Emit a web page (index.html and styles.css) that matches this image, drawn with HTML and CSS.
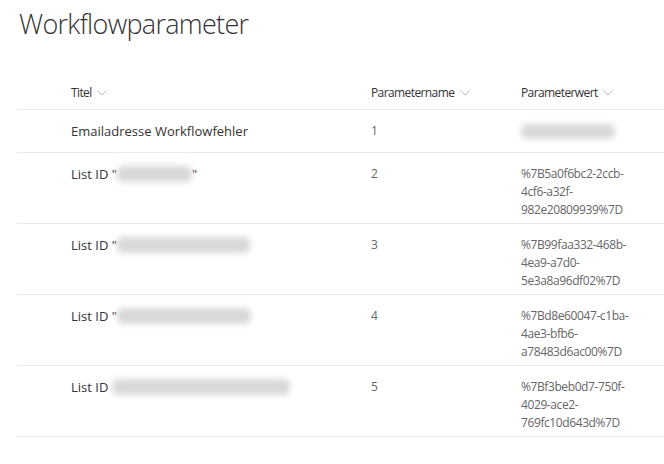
FILE: index.html
```html
<!DOCTYPE html>
<html lang="de">
<head>
    <meta charset="UTF-8">
    <title>Workflowparameter</title>
    <link rel="stylesheet" href="styles.css">
</head>
<body>
    <div class="page">
        <h1 class="page-title">Workflowparameter</h1>

        <div class="list">
            <div class="list-head">
                <div class="col col-title">Titel <svg class="chev" width="10" height="6" viewBox="0 0 10 6"><polyline points="0.5,0.5 5,5 9.5,0.5"/></svg></div>
                <div class="col col-name">Parametername <svg class="chev" width="10" height="6" viewBox="0 0 10 6"><polyline points="0.5,0.5 5,5 9.5,0.5"/></svg></div>
                <div class="col col-value">Parameterwert <svg class="chev" width="10" height="6" viewBox="0 0 10 6"><polyline points="0.5,0.5 5,5 9.5,0.5"/></svg></div>
            </div>

            <div class="list-row">
                <div class="col col-title">Emailadresse Workflowfehler</div>
                <div class="col col-name">1</div>
                <div class="col col-value"><span class="blur" style="width: 94px"></span></div>
            </div>

            <div class="list-row">
                <div class="col col-title">List ID "<span class="blur" style="width: 75px"></span>"</div>
                <div class="col col-name">2</div>
                <div class="col col-value">%7B5a0f6bc2-2ccb-4cf6-a32f-982e20809939%7D</div>
            </div>

            <div class="list-row">
                <div class="col col-title">List ID "<span class="blur" style="width: 133px"></span></div>
                <div class="col col-name">3</div>
                <div class="col col-value">%7B99faa332-468b-4ea9-a7d0-5e3a8a96df02%7D</div>
            </div>

            <div class="list-row">
                <div class="col col-title">List ID "<span class="blur" style="width: 134px"></span></div>
                <div class="col col-name">4</div>
                <div class="col col-value">%7Bd8e60047-c1ba-4ae3-bfb6-a78483d6ac00%7D</div>
            </div>

            <div class="list-row">
                <div class="col col-title">List ID <span class="blur" style="width: 178px"></span></div>
                <div class="col col-name">5</div>
                <div class="col col-value">%7Bf3beb0d7-750f-4029-ace2-769fc10d643d%7D</div>
            </div>
        </div>
    </div>
</body>
</html>
```

FILE: styles.css
```css
body {
    margin: 0;
    background: #fff;
    font-family: "Open Sans", "Noto Sans", sans-serif;
    color: #333;
}

.page {
    padding: 4px 0 0 17px;
}

.page-title {
    margin: 0 0 0 2px;
    font-size: 27px;
    font-weight: 300;
    letter-spacing: -0.7px;
    line-height: 40px;
    color: #333;
}

.list {
    margin-top: 23px;
}

.list-head,
.list-row {
    display: grid;
    grid-template-columns: 300px 150px 125px;
    padding-left: 54px;
    border-bottom: 1px solid #eaeaea;
    box-sizing: border-box;
}

.list-head {
    height: 43px;
    padding-top: 8px;
    align-items: center;
    font-size: 12px;
    letter-spacing: -0.6px;
    color: #333;
}

.list-row {
    min-height: 43px;
    padding-top: 11px;
    padding-bottom: 4px;
    align-items: start;
}

.chev {
    margin-left: 3px;
    vertical-align: 1px;
}

.chev polyline {
    fill: none;
    stroke: #b8b8b8;
    stroke-width: 1;
}

.list-row .col-title {
    font-size: 13px;
    line-height: 20px;
    color: #333;
}

.list-row .col-name,
.list-row .col-value {
    font-size: 12px;
    letter-spacing: -0.4px;
    line-height: 18px;
    color: #666;
    padding-top: 1px;
}

.blur {
    display: inline-block;
    height: 16px;
    vertical-align: -3px;
    background: #d8d8d8;
    border-radius: 6px;
    filter: blur(3px);
}

.list-row .col-value .blur {
    height: 15px;
    vertical-align: -4px;
}
```
